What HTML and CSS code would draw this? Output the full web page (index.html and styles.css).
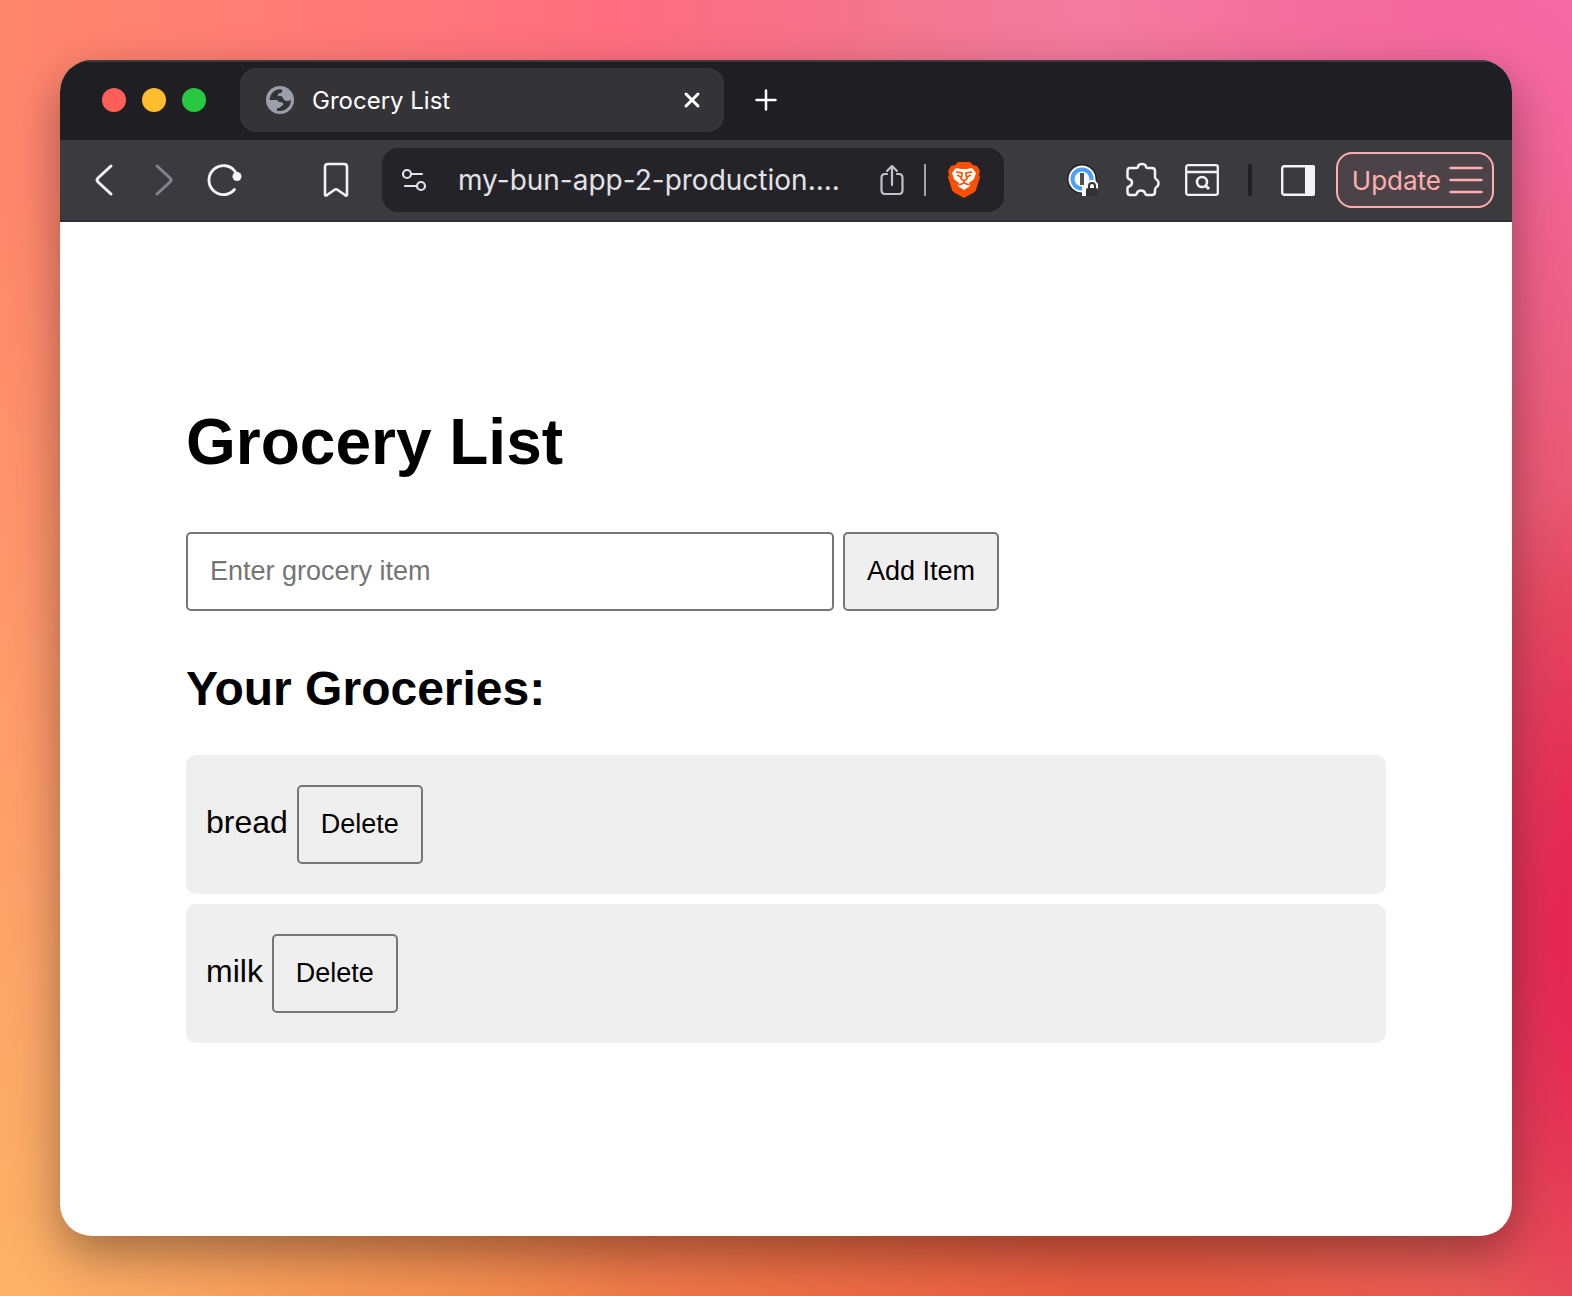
FILE: index.html
```html
<!DOCTYPE html>
<html lang="en">
<head>
    <meta charset="UTF-8">
    <meta name="viewport" content="width=device-width, initial-scale=1.0">
    <title>Grocery List</title>
    <link rel="stylesheet" href="styles.css">
</head>
<body>

<div class="window">
    <!-- Tab strip -->
    <div class="tab-strip">
        <div class="lights">
            <span class="light red"></span>
            <span class="light yellow"></span>
            <span class="light green"></span>
        </div>
        <div class="tab">
            <svg class="favicon" width="28" height="28" viewBox="0 0 28 28">
                <circle cx="14" cy="14" r="14" fill="#9aa0a8"/>
                <path d="M10 4Q13 3 16 3.500Q17 7 13 7.500Q11 8 12 10Q16 9 17 12Q18 15 21 15Q24 15 25 13.500Q25 23 15 25H11V22Q15 22 15 20Q19 19 16 16Q13 17 11 14H3.500Q4 7 10 4Z" fill="#343338"/>
            </svg>
            <span class="tab-title">Grocery List</span>
            <button class="icon-btn" aria-label="Close tab">
                <svg width="16" height="16" viewBox="0 0 16 16" fill="none" stroke="#fff" stroke-width="3" stroke-linecap="round"><path d="M2 2L14 14M14 2L2 14"/></svg>
            </button>
        </div>
        <button class="icon-btn new-tab" aria-label="New tab">
            <svg width="22" height="22" viewBox="0 0 22 22" fill="none" stroke="#fff" stroke-width="2.500" stroke-linecap="round"><path d="M11 1.500V20.500M1.500 11H20.500"/></svg>
        </button>
    </div>

    <!-- Toolbar -->
    <div class="toolbar">
        <div class="nav">
            <button class="icon-btn" aria-label="Back">
                <svg width="18" height="32" viewBox="0 0 18 32" fill="none" stroke="#f4f4f6" stroke-width="3" stroke-linecap="round" stroke-linejoin="round"><path d="M16 2L3 14Q1 16 3 18L16 30"/></svg>
            </button>
            <button class="icon-btn" aria-label="Forward">
                <svg width="18" height="32" viewBox="0 0 18 32" fill="none" stroke="#85848a" stroke-width="3" stroke-linecap="round" stroke-linejoin="round"><path d="M2 2L15 14Q17 16 15 18L2 30"/></svg>
            </button>
            <button class="icon-btn" aria-label="Reload">
                <svg width="36" height="36" viewBox="0 0 36 36" fill="none" stroke="#f4f4f6" stroke-width="2.800" stroke-linecap="round"><path d="M27.500 27.500A14.500 14.500 0 1 1 28.500 10"/><circle cx="30" cy="14.500" r="4.500" fill="#f4f4f6" stroke="none"/></svg>
            </button>
        </div>
        <button class="icon-btn" aria-label="Bookmark">
            <svg width="26" height="36" viewBox="0 0 26 36" fill="none" stroke="#f4f4f6" stroke-width="2.600" stroke-linejoin="round"><path d="M2 5Q2 2 5 2H21Q24 2 24 5V33Q23 34 22 33L14 27.500Q13 27 12 27.500L4 33Q3 34 2 33Z"/></svg>
        </button>
        <div class="address">
            <button class="icon-btn" aria-label="Site settings">
                <svg width="26" height="24" viewBox="0 0 26 24" fill="none" stroke="#e3e2e8" stroke-width="2.200" stroke-linecap="round"><circle cx="6" cy="6" r="4"/><path d="M11 6H21M4 18H15"/><circle cx="20" cy="18" r="4"/></svg>
            </button>
            <span class="url">my-bun-app-2-production....</span>
            <button class="icon-btn" aria-label="Share">
                <svg width="24" height="32" viewBox="0 0 24 32" fill="none" stroke="#c3c2c8" stroke-width="2.200" stroke-linecap="round" stroke-linejoin="round"><path d="M7 10H5Q1.500 10 1.500 14V26Q1.500 30 5 30H19Q22.500 30 22.500 26V14Q22.500 10 19 10H17M12 21V2M7 7L12 2L17 7"/></svg>
            </button>
            <span class="divider"></span>
            <button class="icon-btn" aria-label="Brave Shields">
                <svg width="32" height="36" viewBox="0 0 32 36">
                    <path d="M10 0H22L25 3L29 4L32 9L31 13L32 15L28 28Q27 30 25 31L16 36L7 31Q5 30 4 28L0 15L1 13L0 9L3 4L7 3Z" fill="#fb5002"/>
                    <path d="M8 6L13 7H19L24 6L28 11L26 17L21 21L22 24L16 28L10 24L11 21L6 17L4 11Z" fill="#fff"/>
                    <path d="M8 10L14 11V13L13 17L16 19L19 17L18 13V11L24 10M9 13L13 15M23 13L19 15M16 19V21L11 23M16 21L21 23" fill="none" stroke="#fb5002" stroke-width="1.600"/>
                </svg>
            </button>
        </div>
        <div class="extensions">
            <button class="icon-btn" aria-label="1Password">
                <svg width="32" height="32" viewBox="0 0 32 32">
                    <circle cx="15" cy="15" r="15" fill="#202124"/>
                    <circle cx="15" cy="15" r="13.500" fill="#f8f8f8"/>
                    <circle cx="15" cy="15" r="9.500" fill="none" stroke="#48a1fa" stroke-width="4"/>
                    <path d="M15 32V22L19 21L23 16H28L31 20V32Z" fill="#f8f8f8"/>
                    <rect x="13" y="9" width="4" height="12" fill="#505050"/>
                    <path d="M19 26Q19 24 21 24H29Q31 24 31 26V32H19Z" fill="#333"/>
                    <path d="M22 25V22Q22 19 25 19Q28 19 28 22V25" fill="none" stroke="#333" stroke-width="2"/>
                </svg>
            </button>
            <button class="icon-btn" aria-label="Extensions">
                <svg width="36" height="36" viewBox="0 0 36 36" fill="none" stroke="#f4f4f6" stroke-width="2.500" stroke-linejoin="round"><path d="M6 6H12Q14 6 14 4.500Q14.500 2 18 2Q21.500 2 22 4.500Q22 6 24 6H28Q31 6 31 9V15Q31 17 33 18Q34.500 19 34.500 21Q34.500 24 32.500 25Q31 26 31 28V30Q31 33 28 33H23Q21.500 33 21 31Q20 28.500 17 28.500Q14 28.500 13 31Q12.500 33 11 33H6Q3.500 33 3.500 30V26Q3.500 25 5 24.500Q8 23.500 8 20.500Q8 18 5 17Q3.500 16.500 3.500 15V9Q3.500 6 6 6Z"/></svg>
            </button>
            <button class="icon-btn" aria-label="Search page">
                <svg width="34" height="32" viewBox="0 0 34 32" fill="none" stroke="#f4f4f6" stroke-width="2.300"><rect x="1.200" y="1.200" width="31.600" height="29.600" rx="2"/><path d="M1 8H33"/><circle cx="17" cy="18" r="5" stroke-width="2.600"/><path d="M20.500 21.500L24 25" stroke-width="3"/></svg>
            </button>
        </div>
        <span class="divider dark"></span>
        <button class="icon-btn" aria-label="Sidebar">
            <svg width="34" height="32" viewBox="0 0 34 32"><rect x="1.200" y="2.200" width="31.600" height="28.600" rx="2" fill="none" stroke="#f4f4f6" stroke-width="2.400"/><path d="M24 1H32Q34 1 34 3V30Q34 32 32 32H24Z" fill="#f4f4f6"/></svg>
        </button>
        <button class="update">
            Update
            <svg width="34" height="28" viewBox="0 0 34 28" fill="none" stroke="#ffb0ae" stroke-width="2.400" stroke-linecap="round"><path d="M1.500 2H32.500M1.500 14H32.500M1.500 26H32.500"/></svg>
        </button>
    </div>

    <!-- Page content -->
    <main class="page">
        <h1>Grocery List</h1>
        <form class="add-form">
            <input type="text" class="item-input" placeholder="Enter grocery item" aria-label="Grocery item">
            <button type="button" class="btn">Add Item</button>
        </form>
        <h2>Your Groceries:</h2>
        <ul class="groceries">
            <li>bread <button class="btn">Delete</button></li>
            <li>milk <button class="btn">Delete</button></li>
        </ul>
    </main>
</div>

</body>
</html>
```

FILE: styles.css
```css
* {
    box-sizing: border-box;
}
body {
    margin: 0;
    padding: 60px;
    min-height: 100vh;
    display: flex;
    font-family: Arial, "Liberation Sans", sans-serif;
    background:
        radial-gradient(ellipse 16% 36% at 104% 72%, #e52753 30%, transparent),
        radial-gradient(ellipse 45% 50% at 103% -3%, #f86cac, transparent),
        radial-gradient(ellipse 30% 30% at 70% 0%, #f1819f, transparent),
        radial-gradient(ellipse 40% 90% at 0% 103%, #fdb468, transparent),
        radial-gradient(ellipse 45% 30% at 25% 103%, #ef8048 20%, transparent),
        radial-gradient(ellipse 50% 40% at 62% 104%, #e95b42 30%, transparent),
        linear-gradient(90deg, #ff876c, #ff6e82 40%, #e65568);
}
.window {
    flex: 1;
    display: flex;
    flex-direction: column;
    border-radius: 32px;
    overflow: hidden;
    background-color: #fff;
    box-shadow: 0 18px 48px rgba(0, 0, 0, 0.36);
}
button {
    font-family: inherit;
    cursor: pointer;
}
.icon-btn {
    display: flex;
    padding: 0;
    border: none;
    background: none;
}
.icon-btn svg {
    overflow: visible;
}

/* Tab strip */
.tab-strip {
    display: flex;
    align-items: center;
    height: 80px;
    padding: 0 42px;
    background-color: #1f1e23;
    box-shadow: inset 0 2px 0 #3c3c40;
    font-family: Inter, sans-serif;
}
.lights {
    display: flex;
    gap: 16px;
    margin-right: 34px;
}
.light {
    width: 24px;
    height: 24px;
    border-radius: 50%;
}
.red {
    background-color: #ff5f58;
}
.yellow {
    background-color: #ffbc2e;
}
.green {
    background-color: #28c840;
}
.tab {
    display: flex;
    align-items: center;
    flex: 0 1 484px;
    height: 64px;
    padding: 0 24px 0 26px;
    border-radius: 16px;
    background-color: #343338;
    color: #fff;
}
.tab-title {
    flex: 1;
    margin-left: 18px;
    font-size: 24px;
}
.new-tab {
    margin-left: 31px;
}

/* Toolbar */
.toolbar {
    display: flex;
    align-items: center;
    height: 82px;
    padding: 0 18px 0 35px;
    background-color: #3b3a3f;
    border-bottom: 2px solid #2f2e33;
    font-family: Inter, sans-serif;
}
.nav {
    display: flex;
    align-items: center;
    gap: 42px;
    margin-right: 80px;
}
.nav .icon-btn:last-child {
    margin-left: -8px;
}
.address {
    display: flex;
    align-items: center;
    flex: 0 1 622px;
    height: 64px;
    margin-left: 33px;
    padding: 0 24px 0 19px;
    border-radius: 16px;
    background-color: #242328;
}
.url {
    flex: 1;
    margin-left: 31px;
    color: #e3e2e8;
    font-size: 28px;
    white-space: nowrap;
}
.divider {
    width: 2px;
    height: 32px;
    margin: 0 22px 0 20px;
    background-color: #a5a4aa;
}
.dark {
    width: 4px;
    margin: 0 29px;
    border-radius: 2px;
    background-color: #202024;
}
.extensions {
    display: flex;
    align-items: center;
    gap: 25px;
    margin-left: auto;
}
.update {
    display: flex;
    align-items: center;
    gap: 8px;
    height: 56px;
    margin-left: 21px;
    padding: 0 9px 0 14px;
    border: 2px solid #ffb0ae;
    border-radius: 16px;
    background-color: #4b4347;
    color: #ffb0ae;
    font-size: 26px;
}

/* Page content */
.page {
    width: 100%;
    max-width: 1200px;
    margin: 0 auto;
    padding: 183px 0 100px;
    font-size: 32px;
}
h1 {
    margin: 0 0 53px;
    font-size: 64px;
    line-height: 74px;
}
h2 {
    margin: 50px 0 39px;
    font-size: 48px;
    line-height: 55px;
}
.add-form {
    display: flex;
    gap: 9px;
}
.item-input {
    width: 54%;
    height: 79px;
    padding: 20px 22px;
    border: 2px solid #767676;
    border-radius: 5px;
    font-family: inherit;
    font-size: 27px;
}
.item-input::placeholder {
    color: #757575;
}
.btn {
    height: 79px;
    padding: 0 22px;
    border: 2px solid #767676;
    border-radius: 5px;
    background-color: #efefef;
    color: #000;
    font-size: 27px;
}
.groceries {
    margin: 0;
    padding: 0;
    list-style: none;
}
.groceries li {
    margin-bottom: 10px;
    padding: 30px 20px;
    border-radius: 10px;
    background-color: #efefef;
}
```
